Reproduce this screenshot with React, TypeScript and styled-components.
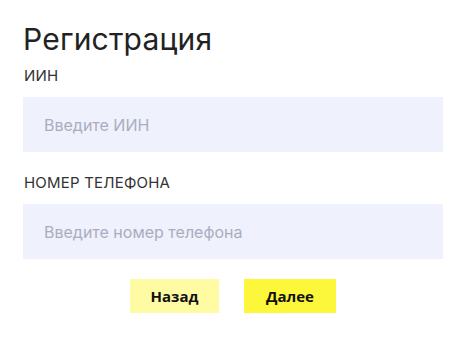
import React from "react";
import styled, { createGlobalStyle } from "styled-components";

const Global = createGlobalStyle`
  html, body { margin: 0; padding: 0; background: #ffffff; }
  * { box-sizing: border-box; }
`;

const Page = styled.div`
  width: 475px;
  height: 347px;
  padding: 20px 32px 0 23px;
  display: flex;
  flex-direction: column;
  font-family: Inter, "Noto Sans", sans-serif;
`;

const Title = styled.h1`
  margin: 0;
  font-size: 30px;
  font-weight: 400;
  line-height: 38px;
  color: #222222;
  letter-spacing: 0.2px;
`;

const Field = styled.div<{ $top: number }>`
  display: flex;
  flex-direction: column;
  margin-top: ${(p) => p.$top}px;
`;

const Label = styled.label`
  font-size: 15px;
  line-height: 18px;
  color: #333333;
  text-transform: uppercase;
  margin-left: 1px;
  letter-spacing: 0.2px;
`;

const Input = styled.input`
  margin-top: 12px;
  width: 420px;
  height: 55px;
  border: none;
  outline: none;
  background: #eff1fd;
  padding: 0 21px;
  font-family: Inter, "Noto Sans", sans-serif;
  font-size: 16px;
  color: #333;
  &::placeholder { color: #abadbf; }
`;

const Actions = styled.div`
  width: 420px;
  display: flex;
  justify-content: center;
  gap: 25px;
  margin-top: 20px;
`;

const Button = styled.button<{ $primary?: boolean }>`
  height: 34px;
  width: ${(p) => (p.$primary ? 92 : 89)}px;
  border: none;
  background: ${(p) => (p.$primary ? "#fdf73c" : "#fefba3")};
  font-family: "Open Sans", "Noto Sans", sans-serif;
  font-weight: 700;
  font-size: 15px;
  color: #111111;
  padding: 0;
  cursor: pointer;
`;

export default function App() {
  return (
    <>
      <Global />
      <Page>
        <Title>Регистрация</Title>
        <Field $top={9}>
          <Label>ИИН</Label>
          <Input placeholder="Введите ИИН" />
        </Field>
        <Field $top={22}>
          <Label>Номер телефона</Label>
          <Input placeholder="Введите номер телефона" />
        </Field>
        <Actions>
          <Button>Назад</Button>
          <Button $primary>Далее</Button>
        </Actions>
      </Page>
    </>
  );
}
